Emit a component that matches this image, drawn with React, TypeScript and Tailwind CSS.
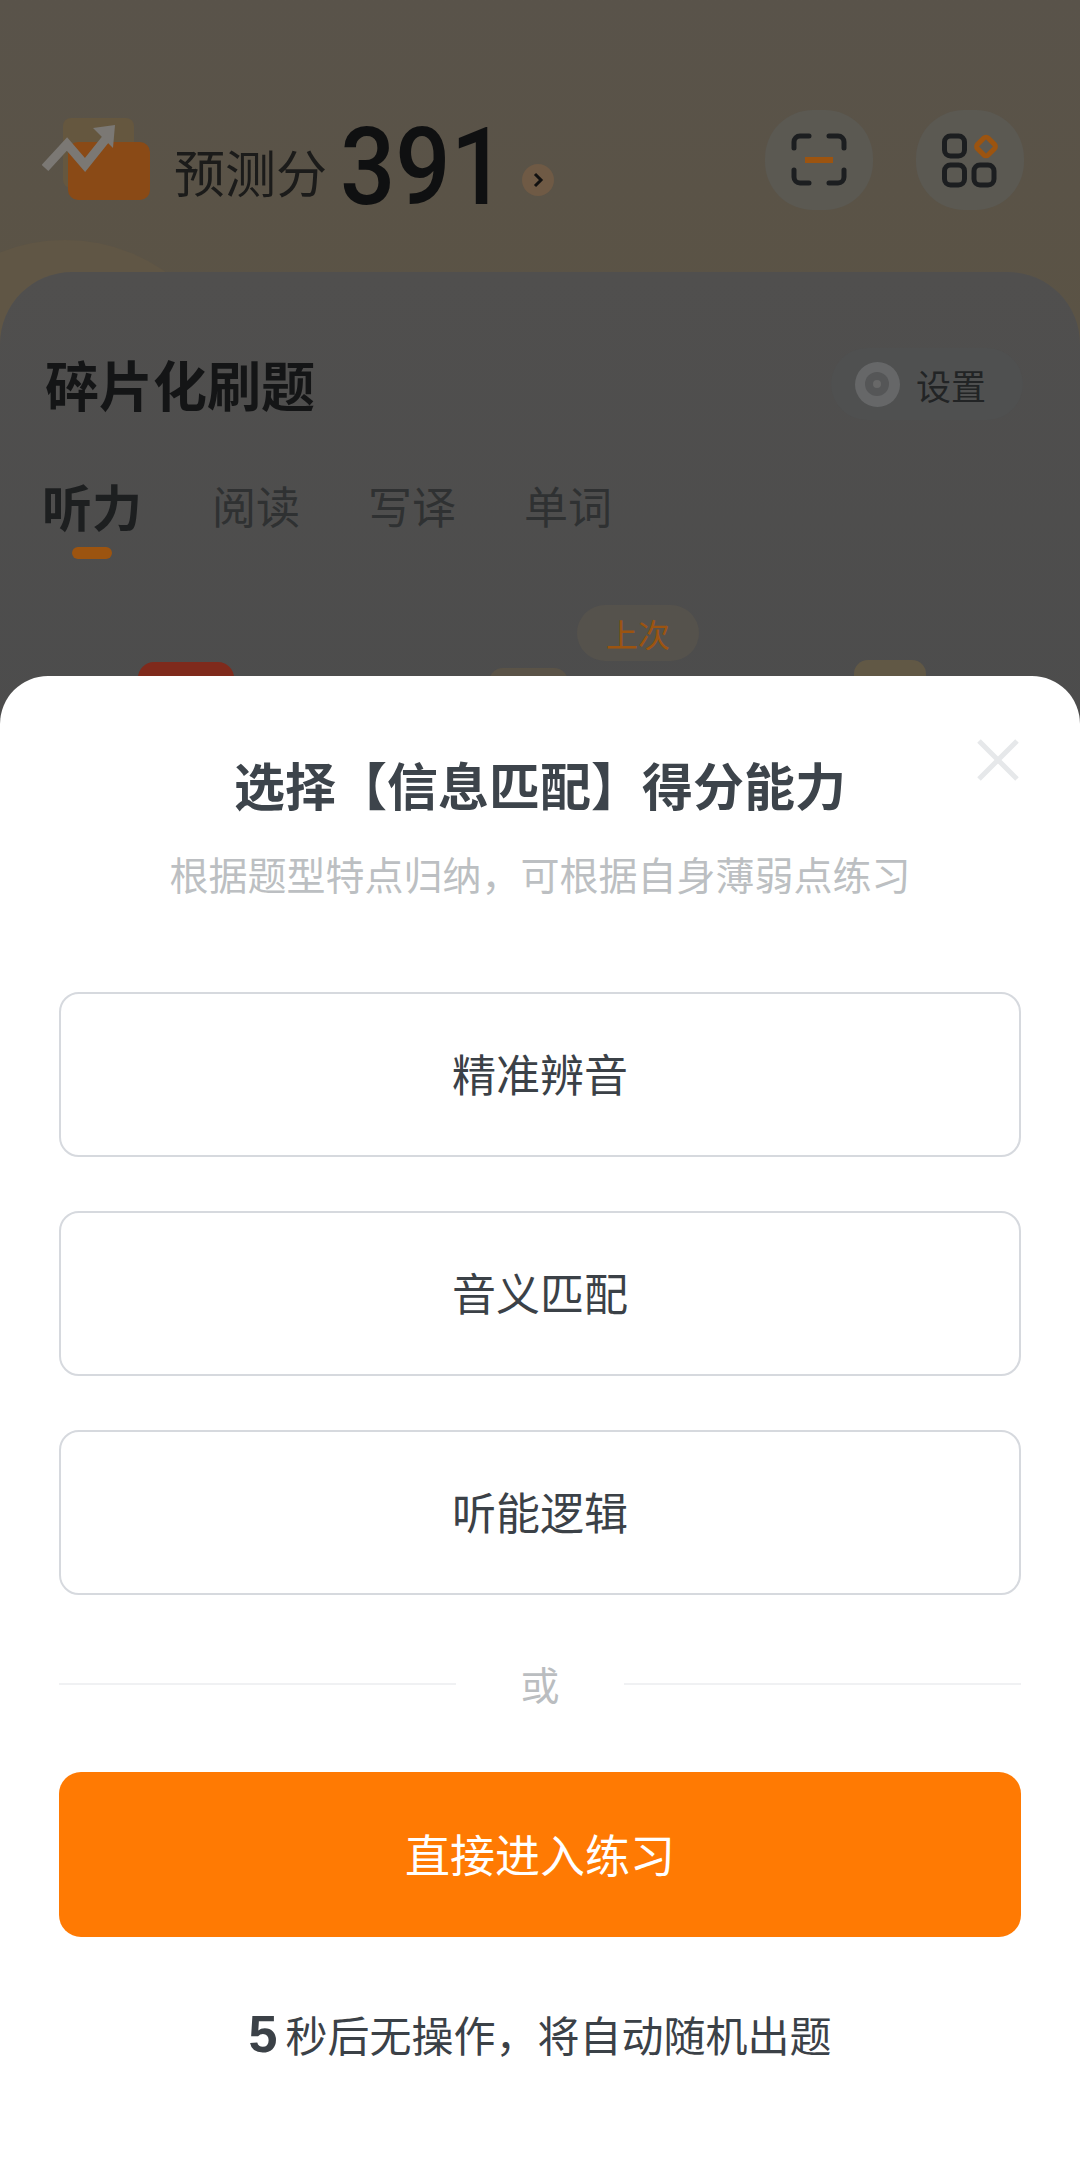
const font = "font-['Noto_Sans_CJK_SC','Liberation_Sans',sans-serif]";

function ScanIcon() {
  return (
    <svg width="56" height="54" viewBox="0 0 56 54" fill="none" strokeWidth="5" strokeLinecap="round">
      <path d="M3 15V9a6 6 0 0 1 6-6h9M38 3h9a6 6 0 0 1 6 6v6M3 37v7a6 6 0 0 0 6 6h9M38 50h9a6 6 0 0 0 6-6v-7" stroke="#1c1e20" />
      <path d="M14 27h28" stroke="#9c5410" strokeWidth="6" strokeLinecap="butt" />
    </svg>
  );
}

function AppsIcon() {
  return (
    <svg width="56" height="56" viewBox="0 0 56 56" fill="none" strokeWidth="5" stroke="#1c1e20">
      <rect x="2.5" y="4" width="20" height="20" rx="6" />
      <rect x="2.5" y="33" width="20" height="20" rx="6" />
      <rect x="32" y="33" width="20" height="20" rx="6" />
      <rect x="36.5" y="7" width="15" height="15" rx="3" stroke="#9c5410" transform="rotate(45 44 14.5)" />
    </svg>
  );
}

function ScoreIcon() {
  return (
    <svg width="110" height="84" viewBox="0 0 110 84">
      <rect x="21" y="0" width="71" height="70" rx="8" fill="#65573f" />
      <rect x="26" y="24" width="82" height="58" rx="10" fill="#8a4a16" />
      <path d="M3 50l22-24 18 21 24-30" fill="none" stroke="#7b7874" strokeWidth="9" />
      <path d="M51 10l22-3-2 23z" fill="#7b7874" />
    </svg>
  );
}

function Header() {
  return (
    <div className="relative flex items-center h-[272px] pt-[48px] pl-[42px] pr-[56px]">
      <ScoreIcon />
      <span className="ml-[22px] mt-[22px] text-[#1b1b1a] text-[51px] leading-none">预测分</span>
      <span className="ml-[13px] -mr-[16px] mt-[14px] origin-left scale-x-[.91] text-[#0f1011] text-[107px] leading-none font-medium font-['Roboto',sans-serif]">391</span>
      <span className="ml-[16px] mt-[40px] w-[32px] h-[32px] rounded-full bg-[#6f5a45] flex items-center justify-center">
        <svg width="12" height="16" viewBox="0 0 12 16" fill="none" stroke="#111" strokeWidth="3"><path d="M3 2l6 6-6 6" /></svg>
      </span>
      <div className="ml-auto flex gap-[43px]">
        <div className="w-[108px] h-[100px] rounded-[48px] bg-[#5b5952] flex items-center justify-center"><ScanIcon /></div>
        <div className="w-[108px] h-[100px] rounded-[48px] bg-[#5b5952] flex items-center justify-center"><AppsIcon /></div>
      </div>
    </div>
  );
}

function Background() {
  const tabs = ["阅读", "写译", "单词"];
  return (
    <div className="relative h-[760px] overflow-hidden bg-gradient-to-b from-[#59534a] via-[#5b5344] to-[#625642]">
      {/* soft warm blob behind the card */}
      <span className="absolute -left-[110px] top-[240px] w-[350px] h-[350px] rounded-full bg-[#605645]" />
      <Header />
      <div className="relative h-[488px] rounded-t-[72px] bg-gradient-to-b from-[#504f4e] to-[#4c4c4c] pt-[76px] pl-[45px] pr-[57px]">
        <div className="flex items-center justify-between">
          <span className="text-[#141516] text-[54px] leading-none font-bold">碎片化刷题</span>
          <div className="flex items-center gap-[16px] h-[72px] pl-[24px] pr-[37px] rounded-[36px] bg-[#4f5050]">
            <span className="w-[45px] h-[45px] rounded-full bg-[#666768] flex items-center justify-center">
              <span className="w-[24px] h-[24px] rounded-full bg-[#555657] flex items-center justify-center">
                <span className="w-[8px] h-[8px] rounded-full bg-[#686868]" />
              </span>
            </span>
            <span className="text-[#222425] text-[35px] leading-none">设置</span>
          </div>
        </div>
        <div className="flex items-start mt-[60px] -ml-[3px]">
          <div className="flex flex-col items-center mr-[70px]">
            <span className="text-[#1d1f20] text-[50px] leading-none font-bold">听力</span>
            <span className="mt-[17px] w-[40px] h-[12px] rounded-full bg-[#9c5410]" />
          </div>
          <div className="flex gap-[68px] pt-[3px]">
            {tabs.map((t) => (
              <span key={t} className="text-[#2f3132] text-[44px] leading-none">{t}</span>
            ))}
          </div>
        </div>
        <div className="relative mt-[46px] flex">
          <span className="absolute left-[532px] top-0 w-[122px] h-[56px] rounded-[28px] bg-[#55524c] flex items-center justify-center text-[#9c5410] text-[32px] leading-none">上次</span>
          <span className="absolute left-[93px] top-[57px] w-[96px] h-[40px] rounded-t-[16px] bg-[#7f2a1c]" />
          <span className="absolute left-[444px] top-[63px] w-[79px] h-[40px] rounded-t-[14px] bg-[#5a5347]" />
          <span className="absolute left-[809px] top-[55px] w-[72px] h-[40px] rounded-t-[14px] bg-[#615845]" />
        </div>
      </div>
    </div>
  );
}

function Option({ label }: { label: string }) {
  return (
    <div className="h-[165px] pb-[4px] rounded-[20px] border-2 border-[#d6d9de] flex items-center justify-center text-[#3b4147] text-[44px] leading-none">
      {label}
    </div>
  );
}

export default function App() {
  const options = ["精准辨音", "音义匹配", "听能逻辑"];
  return (
    <div className={`relative w-[1080px] h-[2182px] overflow-hidden bg-white ${font}`}>
      <Background />
      {/* bottom sheet over the dimmed page */}
      <div className="absolute left-0 right-0 bottom-0 h-[1506px] rounded-t-[48px] bg-white px-[59px]">
        <svg className="absolute right-[61px] top-[63px]" width="42" height="42" viewBox="0 0 42 42" stroke="#e6e8ea" strokeWidth="5">
          <path d="M2 2l38 38M40 2L2 40" />
        </svg>
        <h2 className="mt-[78px] text-center text-[#3d444b] text-[51px] leading-[60px] font-bold">选择【信息匹配】得分能力</h2>
        <p className="mt-[34px] text-center text-[#bcbfc2] text-[39px] leading-[50px]">根据题型特点归纳，可根据自身薄弱点练习</p>
        <div className="mt-[94px] flex flex-col gap-[54px]">
          {options.map((o) => (
            <Option key={o} label={o} />
          ))}
        </div>
        <div className="mt-[64px] flex items-center justify-between h-[50px]">
          <span className="w-[397px] h-[2px] bg-[#f0f1f3]" />
          <span className="text-[#babdc0] text-[39px] leading-none pb-[2px]">或</span>
          <span className="w-[397px] h-[2px] bg-[#f0f1f3]" />
        </div>
        <div className="mt-[63px] h-[165px] pb-[3px] rounded-[22px] bg-[#ff7a03] flex items-center justify-center text-white text-[45px] leading-none">
          直接进入练习
        </div>
        <div className="mt-[69px] flex items-center justify-center text-[#3b4147] text-[42px] leading-[56px]">
          <span className="mr-[8px] text-[52px] font-bold font-['Liberation_Sans',sans-serif]">5</span>
          秒后无操作，将自动随机出题
        </div>
      </div>
    </div>
  );
}
